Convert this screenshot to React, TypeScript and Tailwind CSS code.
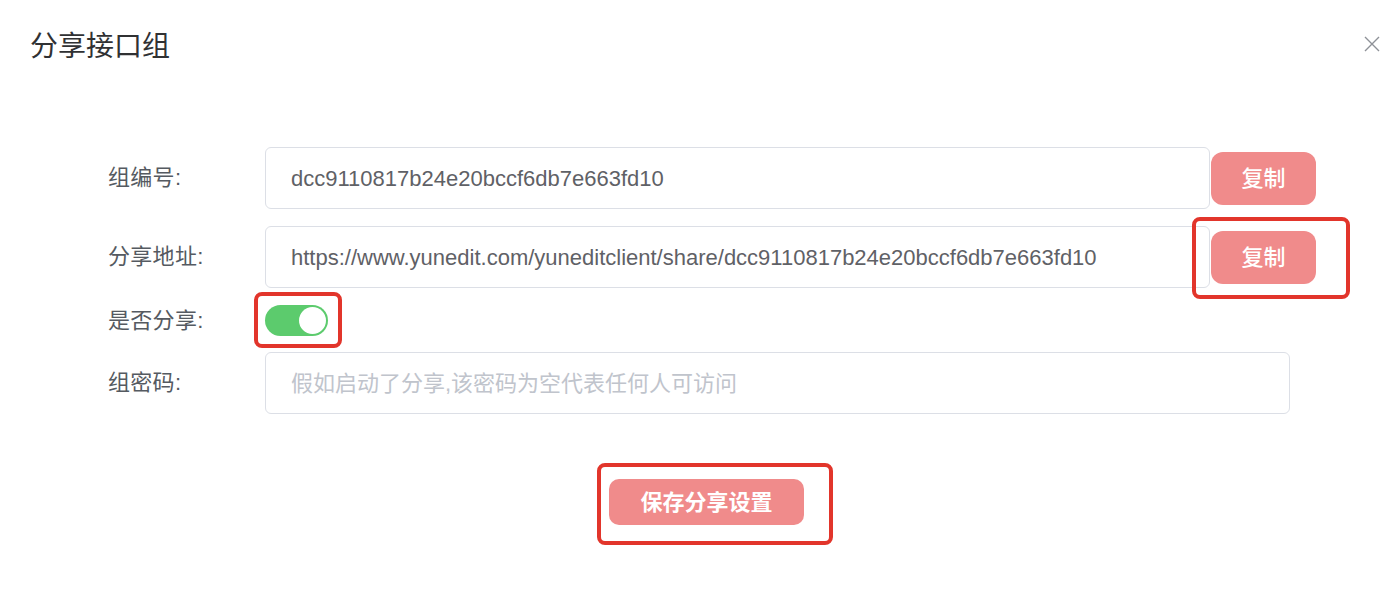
import React from "react";

const FONT = { fontFamily: '"Liberation Sans", "Noto Sans CJK SC", sans-serif' };

function Label({ children }: { children: React.ReactNode }) {
  return (
    <div className="w-[157px] shrink-0 text-[22px] leading-none tracking-[0.3px] text-[#555a61]">{children}</div>
  );
}

function CopyButton() {
  return (
    <button className="ml-px flex h-[53px] w-[105px] items-center justify-center rounded-[12px] bg-[#f08b8b] text-[22px] font-medium text-white">
      复制
    </button>
  );
}

export default function App() {
  return (
    <div style={FONT} className="relative h-[596px] w-[1400px] overflow-hidden bg-white">
      <div className="flex items-start justify-between">
        <div className="pl-[30px] pt-[27px] text-[28px] leading-[40px] text-[#303133]">分享接口组</div>
        <svg className="mr-[20px] mt-[36px]" width="16" height="16" viewBox="0 0 16 16">
          <path d="M1 1 L15 15 M15 1 L1 15" stroke="#8e9197" strokeWidth="1.4" fill="none" />
        </svg>
      </div>

      <div className="mt-[80px] flex flex-col pl-[108px]">
        <div className="flex items-center">
          <Label>组编号:</Label>
          <div className="flex h-[62px] w-[945px] items-center rounded-[6px] border border-[#dcdfe6] pl-[25px] text-[22px] text-[#5f6166]">
            dcc9110817b24e20bccf6db7e663fd10
          </div>
          <CopyButton />
        </div>

        <div className="mt-[17px] flex items-center">
          <Label>分享地址:</Label>
          <div className="flex h-[62px] w-[945px] items-center rounded-[6px] border border-[#dcdfe6] pl-[25px] text-[22px] text-[#5f6166]">
            https://www.yunedit.com/yuneditclient/share/dcc9110817b24e20bccf6db7e663fd10
          </div>
          <CopyButton />
        </div>

        <div className="mt-[17px] flex h-[31px] items-center">
          <Label>是否分享:</Label>
          <div className="flex h-[31px] w-[63px] items-center justify-end rounded-full bg-[#5ccb6d] pr-[2px]">
            <div className="h-[27px] w-[27px] rounded-full bg-white" />
          </div>
        </div>

        <div className="mt-[16px] flex items-center">
          <Label>组密码:</Label>
          <div className="flex h-[62px] w-[1025px] items-center rounded-[6px] border border-[#dcdfe6] pl-[25px] text-[22px] text-[#c0c4cc]">
            假如启动了分享,该密码为空代表任何人可访问
          </div>
        </div>
      </div>

      <div className="mt-[65px] pl-[609px]">
        <button className="flex h-[46px] w-[195px] items-center justify-center rounded-[10px] bg-[#f08b8b] text-[22px] font-bold text-white">
          保存分享设置
        </button>
      </div>

      {/* annotation boxes */}
      <div className="pointer-events-none absolute left-[1192px] top-[217px] h-[82px] w-[158px] rounded-[8px] border-[4px] border-[#e2352b]" />
      <div className="pointer-events-none absolute left-[254px] top-[292px] h-[56px] w-[88px] rounded-[8px] border-[4px] border-[#e2352b]" />
      <div className="pointer-events-none absolute left-[597px] top-[463px] h-[82px] w-[236px] rounded-[8px] border-[4px] border-[#e2352b]" />
    </div>
  );
}
